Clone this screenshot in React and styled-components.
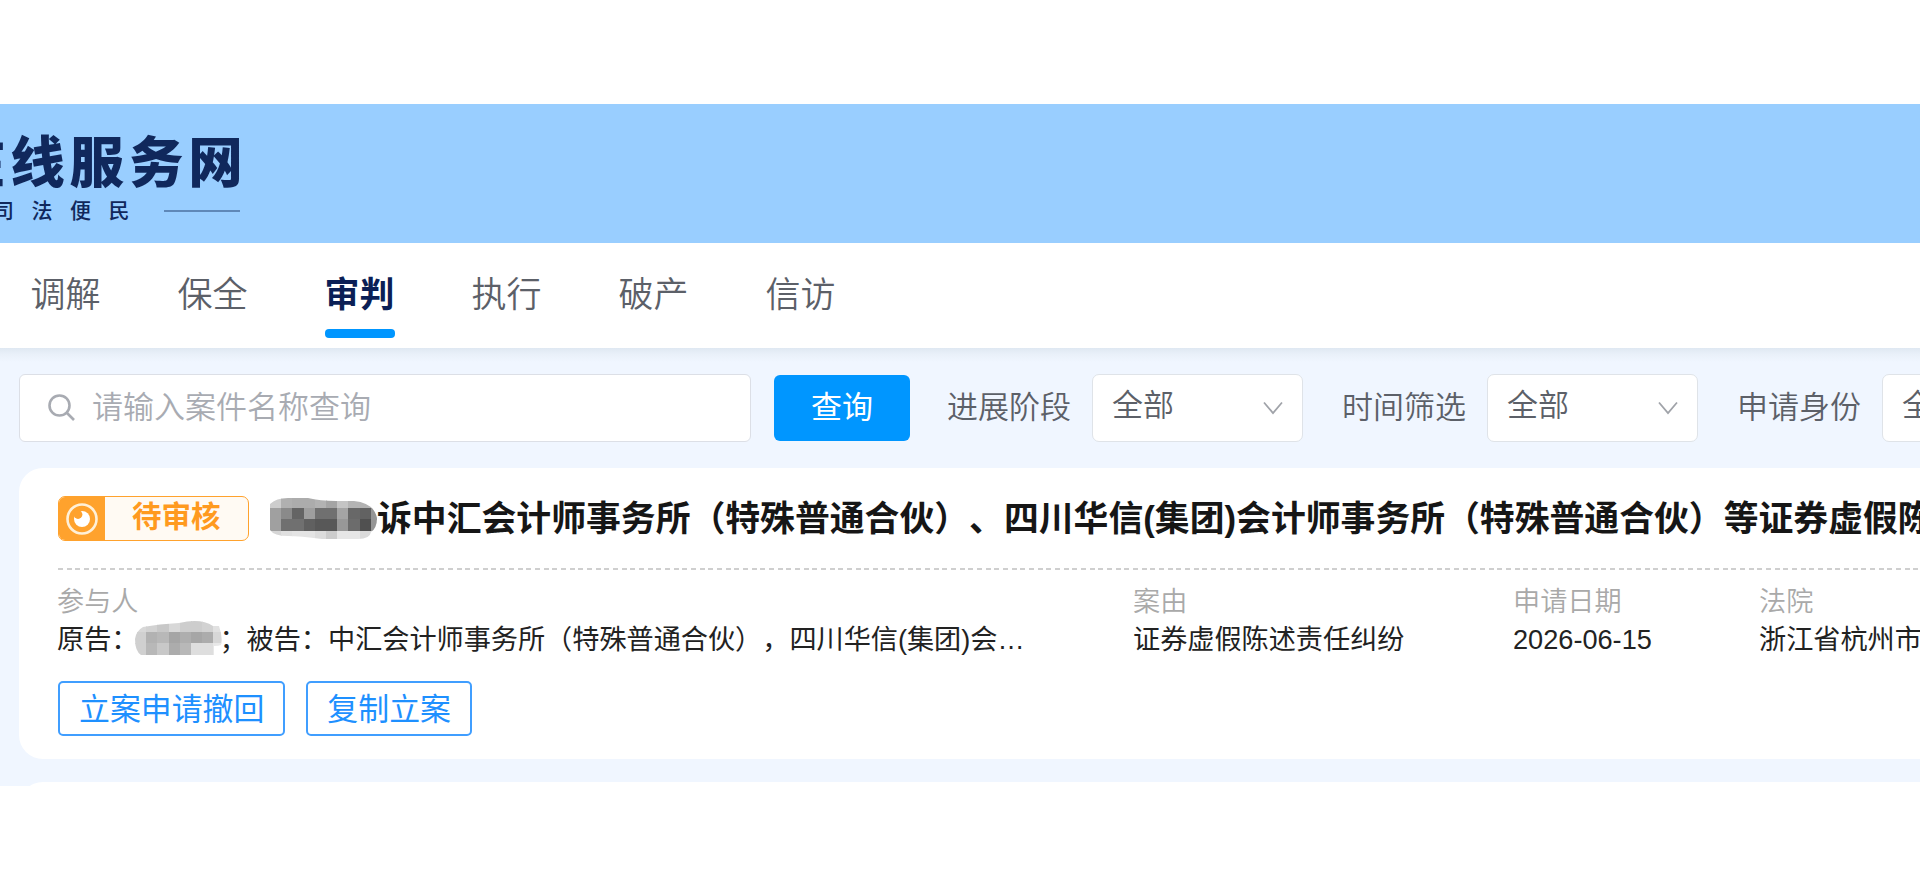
import React, { useState } from 'react';
import styled, { createGlobalStyle } from 'styled-components';

const GlobalStyle = createGlobalStyle`
* { box-sizing: border-box; }
body {
  margin: 0;
  background: #fff;
  overflow: hidden;
  font-family: "Liberation Sans", "Noto Sans CJK SC", sans-serif;
  text-spacing-trim: space-all;
}
`;

const Page = styled.div`
width: 100%;
height: 889px;
padding-top: 104px;
overflow: hidden;
`;

const Header = styled.header`
height: 139px;
padding-top: 27px;
background: #99ceff;
color: #10285c;
overflow: hidden;
`;

const SiteName = styled.div`
margin-left: -49px;
height: 64px;
line-height: 66px;
font-size: 54.5px;
font-weight: 900;
letter-spacing: 4.8px;
white-space: nowrap;
`;

const Slogan = styled.div`
display: flex;
align-items: center;
height: 28px;
margin-left: -7px;
font-size: 21px;
font-weight: 500;
letter-spacing: 17.5px;
`;

const SloganLine = styled.span`
width: 76px;
height: 2px;
margin: 4px 0 0 17px;
background: #5f88b8;
`;

const Nav = styled.nav`
display: flex;
gap: 77px;
height: 105px;
padding-left: 30.5px;
background: #fff;
`;

const Tab = styled.button`
display: flex;
flex-direction: column;
width: 70px;
padding: 26px 0 0;
border: 0;
background: transparent;
font-family: inherit;
font-size: 35px;
line-height: 52px;
white-space: nowrap;
font-weight: ${(props) => (props.$active ? 700 : 350)};
color: ${(props) => (props.$active ? '#0b1f56' : '#5c6068')};

&::after {
  content: '';
  width: 70px;
  height: 9px;
  margin-top: 8px;
  border-radius: 4px;
  background: ${(props) => (props.$active ? '#0096ff' : 'transparent')};
}
`;

const Content = styled.main`
height: 438px;
padding: 26px 0 0 19px;
background: linear-gradient(#dfe8f2, #e9f0f9 6px, #f0f6ff 14px);
overflow: hidden;
`;

const Filters = styled.div`
display: flex;
width: 2200px;
height: 68px;
font-size: 31px;
`;

const SearchBox = styled.label`
display: flex;
align-items: center;
width: 732px;
margin-right: 23px;
padding-left: 28px;
border: 1px solid #dcdfe6;
border-radius: 6px;
background: #fff;

svg {
  margin-right: 16px;
}
`;

const SearchInput = styled.input`
flex: 1;
padding: 0;
border: 0;
outline: 0;
background: transparent;
font-family: inherit;
font-size: 31px;
font-weight: 350;

&::placeholder {
  color: #a8abb2;
  opacity: 1;
}
`;

const SearchButton = styled.button`
width: 136px;
height: 66px;
margin: 1px 37px 0 0;
padding: 0 0 7px;
border: 0;
border-radius: 6px;
background: #0096ff;
color: #fff;
font-family: inherit;
font-size: 31px;
`;

const FilterLabel = styled.span`
width: 145px;
line-height: 68px;
font-weight: 350;
color: #5c6068;
`;

const Select = styled.div`
display: flex;
align-items: center;
justify-content: space-between;
width: 211px;
margin-right: 39px;
padding: 0 19px 4px;
border: 1px solid #dfe3e8;
border-radius: 7px;
background: #fff;
font-weight: 350;
line-height: 56px;
color: #5c6068;

svg {
  margin-top: 4px;
}
`;

const Card = styled.section`
height: 291px;
margin-top: 26px;
padding: 28px 0 0 39px;
border-radius: 24px 0 0 24px;
background: #fff;
white-space: nowrap;
overflow: hidden;

& + & {
  margin-top: 23px;
}
`;

const CardHead = styled.div`
display: flex;
align-items: center;
height: 45px;
`;

const Status = styled.div`
display: flex;
flex: none;
width: 191px;
height: 45px;
margin-right: 21px;
border: 1.5px solid #ffa22d;
border-radius: 7px;
background: #fffaf3;
overflow: hidden;
`;

const StatusIcon = styled.span`
display: flex;
align-items: center;
justify-content: center;
width: 46px;
background: #ffa22d;
`;

const StatusText = styled.span`
flex: 1;
padding-left: 27px;
line-height: 40px;
font-size: 29.5px;
font-weight: 700;
color: #ff9a1f;
`;

const Title = styled.h2`
margin: 0;
font-size: 34.85px;
line-height: 45px;
font-weight: 700;
color: #161616;
`;

const Divider = styled.div`
height: 2px;
margin-top: 27px;
background: repeating-linear-gradient(90deg, #cfcfcf 0 5px, transparent 5px 8.67px);
`;

const Details = styled.div`
display: grid;
grid-template-columns: 1076px 380px 246px 400px;
margin: 13px 0 0 -1px;
font-size: 27.15px;
line-height: 38px;
`;

const DetailName = styled.div`
font-weight: 350;
color: #a9a9a9;
`;

const DetailValue = styled.div`
display: flex;
align-items: center;
height: 38px;
color: #222;
`;

const Actions = styled.div`
display: flex;
gap: 21px;
margin-top: 22px;
`;

const ActionButton = styled.button`
height: 55px;
padding: 0 19px 5px;
border: 2px solid #409eff;
border-radius: 5px;
background: #fff;
color: #1e90ff;
font-family: inherit;
font-size: 30.9px;
`;

const MaskBox = styled.svg`
flex: none;
margin: ${(props) => props.$margin || 0};
`;

const SearchIcon = () => (
  <svg width="28" height="28" viewBox="0 0 28 28" fill="none" stroke="#a8abb2" strokeWidth="2.6">
    <circle cx="11.5" cy="11.5" r="10" />
    <path d="M18.5 18.5l7.5 7.5" />
  </svg>
);

const ArrowIcon = () => (
  <svg width="20" height="14" viewBox="0 0 20 14" fill="none" stroke="#a0a3a9" strokeWidth="1.8">
    <path d="M1 1.500l9 10.500 9-10.500" />
  </svg>
);

const EyeIcon = () => (
  <svg width="34" height="34" viewBox="0 0 34 34">
    <circle cx="17" cy="17" r="14.5" fill="none" stroke="#fff0d8" strokeWidth="2.6" />
    <circle cx="17" cy="17" r="8" fill="#fff" />
    <circle cx="13" cy="12.5" r="4.4" fill="#ffa22d" />
  </svg>
);

// grey levels of the blocks that cover a name, row by row
const titleMask = [
  [205, 176, 172, 172, 178, 164, 196, 180, 178, 176],
  [160, 138, 100, 158, 112, 112, 164, 104, 98, 150],
  [160, 112, 112, 96, 88, 88, 152, 108, 80, 150],
  [214, 224, 228, 228, 220, 204, 230, 230, 218, 214],
];
const personMask = [
  [216, 210, 200, 216, 205, 205, 210, 225],
  [208, 178, 184, 165, 174, 166, 172, 215],
  [208, 184, 200, 172, 184, 222, 222, 232],
];

const Mask = ({ id, rows, cell, width, height, top, outline, margin }) => (
  <MaskBox width={width} height={height} $margin={margin}>
    <clipPath id={id}>
      <path d={outline} />
    </clipPath>
    <g clipPath={`url(#${id})`} shapeRendering="crispEdges">
      {rows.map((row, y) =>
        row.map((level, x) => (
          <rect key={`${x}-${y}`} x={x * cell} y={top + y * cell} width={cell + 0.5} height={cell + 0.5} fill={`rgb(${level},${level},${level})`} />
        ))
      )}
    </g>
  </MaskBox>
);

const tabs = ['调解', '保全', '审判', '执行', '破产', '信访'];
const filters = ['进展阶段', '时间筛选', '申请身份'];

const App = () => {
  const [active, setActive] = useState('审判');
  const [keyword, setKeyword] = useState('');

  return (
    <Page>
      <GlobalStyle />
      <Header>
        <SiteName>在线服务网</SiteName>
        <Slogan>司法便民<SloganLine /></Slogan>
      </Header>
      <Nav>
        {tabs.map((tab) => (
          <Tab key={tab} $active={tab === active} onClick={() => setActive(tab)}>{tab}</Tab>
        ))}
      </Nav>
      <Content>
        <Filters>
          <SearchBox>
            <SearchIcon />
            <SearchInput value={keyword} onChange={(e) => setKeyword(e.target.value)} placeholder="请输入案件名称查询" />
          </SearchBox>
          <SearchButton>查询</SearchButton>
          {filters.map((name) => (
            <React.Fragment key={name}>
              <FilterLabel>{name}</FilterLabel>
              <Select>全部<ArrowIcon /></Select>
            </React.Fragment>
          ))}
        </Filters>
        <Card>
          <CardHead>
            <Status>
              <StatusIcon><EyeIcon /></StatusIcon>
              <StatusText>待审核</StatusText>
            </Status>
            <Mask id="title-mask" rows={titleMask} cell={11.2} width={107} height={42} top={-1}
              outline="M0 6Q6 0 18 0H38Q50 3 66 3H84Q104 5 107 20Q107 30 101 34Q100 41 88 41H52Q30 38 18 38Q4 38 0 32Z" />
            <Title>诉中汇会计师事务所（特殊普通合伙）、四川华信(集团)会计师事务所（特殊普通合伙）等证券虚假陈述责任纠纷</Title>
          </CardHead>
          <Divider />
          <Details>
            <div>
              <DetailName>参与人</DetailName>
              <DetailValue>
                原告：
                <Mask id="person-mask" rows={personMask} cell={11.2} width={87} height={34} top={0} margin="-4px -3px 0 -3px"
                  outline="M8 6Q24 3 44 2Q66 -3 78 5H84Q88 16 86 24Q84 25 79 25V34H6Q0 30 0 18Q1 10 8 6Z" />
                ；被告：中汇会计师事务所（特殊普通合伙），四川华信(集团)会…
              </DetailValue>
            </div>
            <div>
              <DetailName>案由</DetailName>
              <DetailValue>证券虚假陈述责任纠纷</DetailValue>
            </div>
            <div>
              <DetailName>申请日期</DetailName>
              <DetailValue>2026-06-15</DetailValue>
            </div>
            <div>
              <DetailName>法院</DetailName>
              <DetailValue>浙江省杭州市中级人民法院</DetailValue>
            </div>
          </Details>
          <Actions>
            <ActionButton>立案申请撤回</ActionButton>
            <ActionButton>复制立案</ActionButton>
          </Actions>
        </Card>
        <Card />
      </Content>
    </Page>
  );
};

export default App;
